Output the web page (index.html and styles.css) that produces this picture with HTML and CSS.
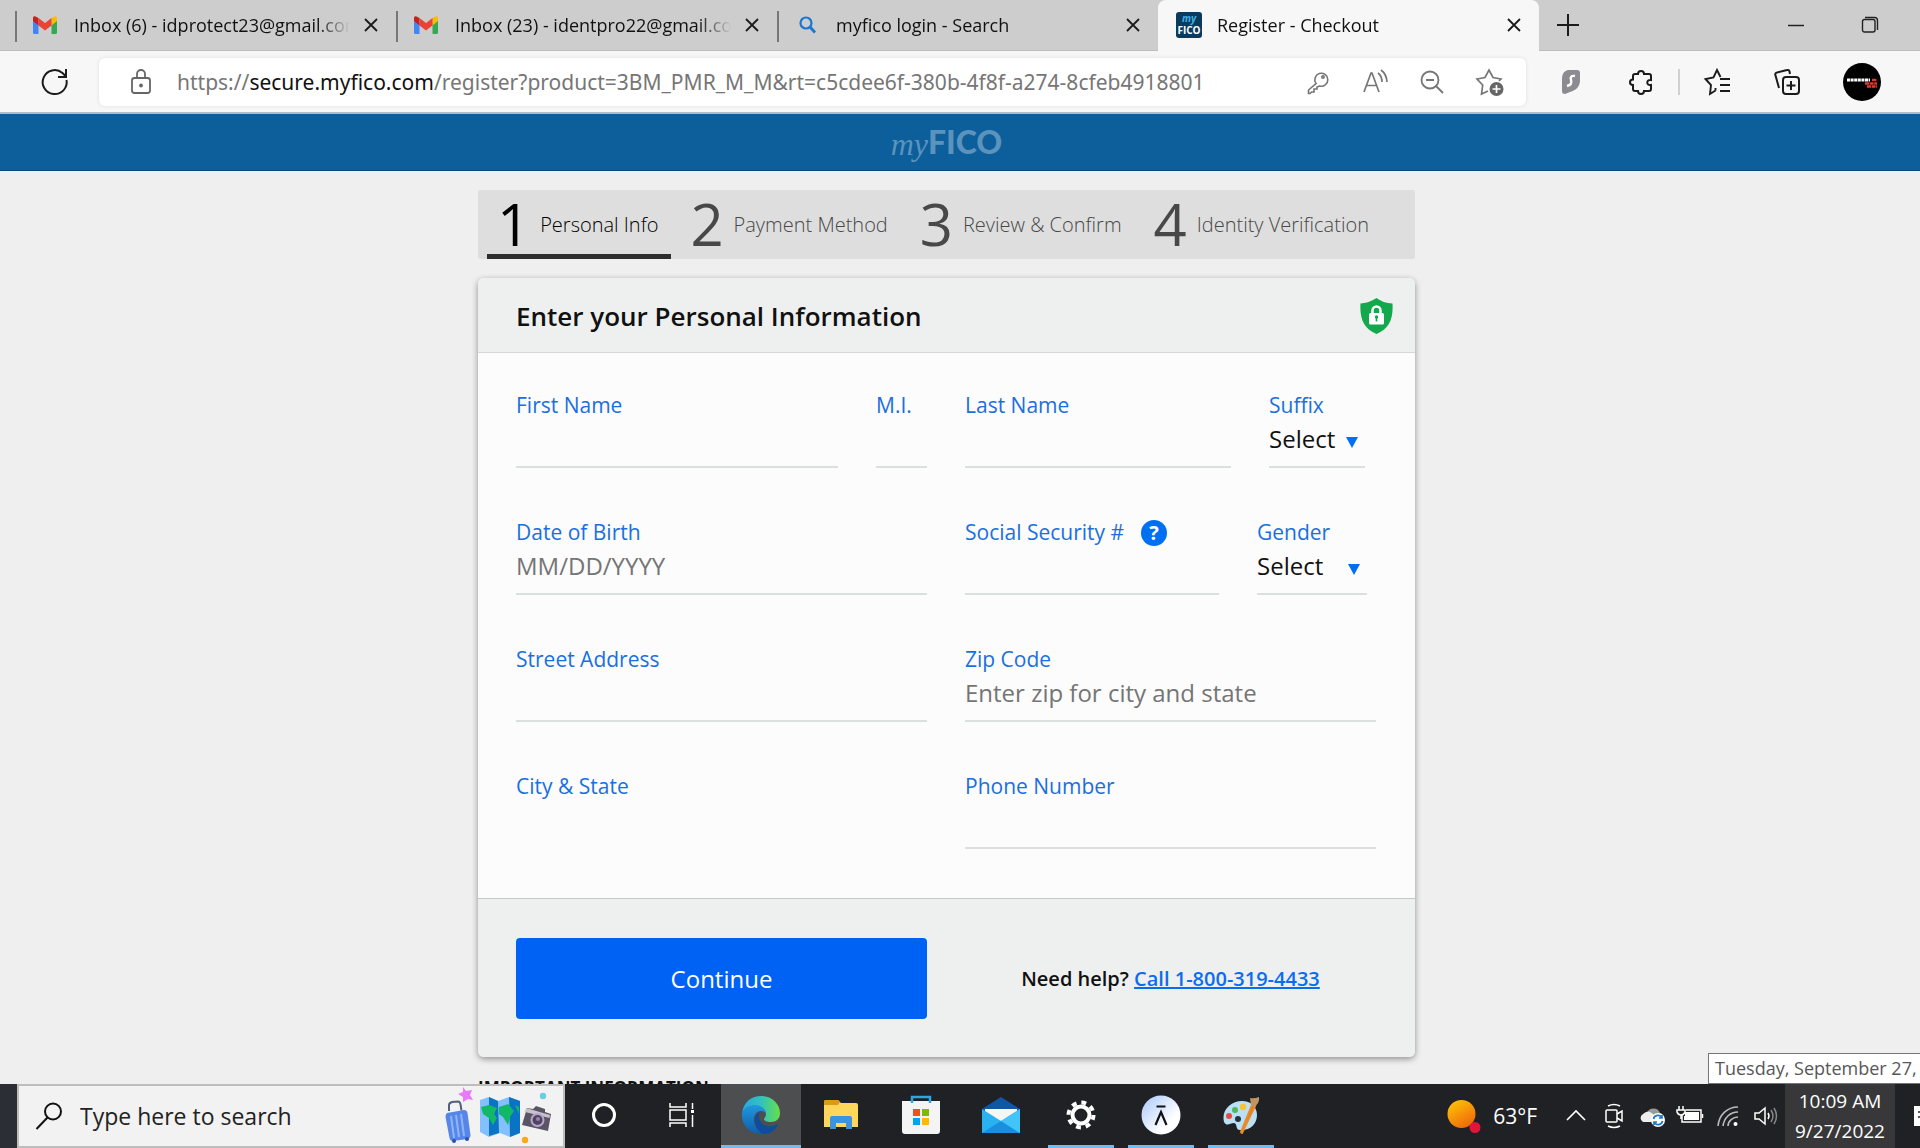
FILE: index.html
```
<!DOCTYPE html>
<html lang="en">
<head>
  <meta charset="utf-8">
  <title>Register - Checkout</title>
  <meta name="viewport" content="width=device-width, initial-scale=1.0">
  <link rel="stylesheet" href="styles.css">
</head>
<body>
<svg class="defs" aria-hidden="true">
  <symbol id="gmail" viewBox="0 0 24 18">
    <path d="M0 3v13.500a1.500 1.500 0 0 0 1.500 1.500H5.500V7z" fill="#4285f4"/>
    <path d="M24 3v13.500a1.500 1.500 0 0 1-1.500 1.500H18.500V7z" fill="#34a853"/>
    <path d="M18.500 2L22 .3a1.700 1.700 0 0 1 2 1.700V5l-5.500 4.500z" fill="#fbbc04"/>
    <path d="M5.500 2L2 .3A1.700 1.700 0 0 0 0 2V5l5.500 4.500z" fill="#c5221f"/>
    <path d="M5.500 9.500V2L12 7l6.500-5v7.500L12 14.500z" fill="#ea4335"/>
  </symbol>
  <symbol id="close" viewBox="0 0 16 16">
    <path d="M2 2l12 12M14 2L2 14" stroke="#1b1b1b" stroke-width="1.800" fill="none"/>
  </symbol>
</svg>

<div class="tabs">
  <div class="tab">
    <svg class="tab-icon" width="24" height="18"><use href="#gmail"/></svg>
    <span class="tab-title">Inbox (6) - idprotect23@gmail.com</span>
    <button class="tab-close" aria-label="Close tab"><svg width="16" height="16"><use href="#close"/></svg></button>
  </div>
  <div class="tab">
    <svg class="tab-icon" width="24" height="18"><use href="#gmail"/></svg>
    <span class="tab-title">Inbox (23) - identpro22@gmail.com</span>
    <button class="tab-close" aria-label="Close tab"><svg width="16" height="16"><use href="#close"/></svg></button>
  </div>
  <div class="tab">
    <svg class="tab-icon" width="24" height="18" viewBox="0 0 24 18"><circle cx="11" cy="7" r="5.500" fill="none" stroke="#1a77d2" stroke-width="2.200"/><path d="M15 11l5 5.500" stroke="#1a77d2" stroke-width="2.800"/></svg>
    <span class="tab-title">myfico login - Search</span>
    <button class="tab-close" aria-label="Close tab"><svg width="16" height="16"><use href="#close"/></svg></button>
  </div>
  <div class="tab active">
    <span class="favicon"><i>my</i><b>FICO</b></span>
    <span class="tab-title">Register - Checkout</span>
    <button class="tab-close" aria-label="Close tab"><svg width="16" height="16"><use href="#close"/></svg></button>
  </div>
  <button class="new-tab" aria-label="New tab"><svg width="24" height="24" viewBox="0 0 24 24"><path d="M12 1v22M1 12h22" stroke="#1b1b1b" stroke-width="2"/></svg></button>
  <div class="window-buttons">
    <button aria-label="Minimize"><svg width="18" height="18" viewBox="0 0 18 18"><path d="M1 9.500h16" stroke="#222" stroke-width="1.500"/></svg></button>
    <button aria-label="Restore"><svg width="18" height="18" viewBox="0 0 18 18" fill="none" stroke="#222" stroke-width="1.400"><rect x="1.500" y="3.500" width="12.500" height="12.500" rx="2"/><path d="M4 1.500h9.500a3 3 0 0 1 3 3V14"/></svg></button>
  </div>
</div>

<div class="toolbar">
  <button class="reload" aria-label="Refresh"><svg width="30" height="30" viewBox="0 0 30 30" fill="none" stroke="#1b1b1b" stroke-width="2"><path d="M26.500 13a12 12 0 1 1-4-7l3.500 3.500"/><path d="M26 2v8h-8"/></svg></button>
  <div class="address">
    <svg width="24" height="28" viewBox="0 0 24 28" fill="none" stroke="#666" stroke-width="1.800"><rect x="3" y="10" width="18" height="15" rx="2.500"/><path d="M8 10V6a4 4 0 0 1 8 0v4"/><circle cx="12" cy="17.500" r="1" fill="#666"/></svg>
    <div class="url" role="textbox" aria-label="Address" contenteditable="true" spellcheck="false">https://<span>secure.myfico.com</span>/register?product=3BM_PMR_M_M&amp;rt=c5cdee6f-380b-4f8f-a274-8cfeb4918801</div>
    <div class="address-icons">
      <button aria-label="Saved password"><svg width="28" height="28" viewBox="0 0 28 28" fill="none" stroke="#767676" stroke-width="1.600"><path d="M12 15.500a6.500 6.500 0 1 1 3.500 2.500L13 19v2h-3v3H7.500L6 25.500H4.500V22z"/><circle cx="19" cy="9" r="1.200"/></svg></button>
      <button aria-label="Read aloud"><svg width="28" height="28" viewBox="0 0 28 28" fill="none" stroke="#767676" stroke-width="1.700"><path d="M3 24L10 5h1l7 19M6 17.500h9M17 5q4 3 4 9M20 2q5.500 4 6 12"/></svg></button>
      <button aria-label="Zoom out"><svg width="28" height="28" viewBox="0 0 28 28" fill="none" stroke="#767676" stroke-width="1.800"><circle cx="12" cy="12" r="8.500"/><path d="M8 12h8M18 18l7 7"/></svg></button>
      <button aria-label="Add to favorites"><svg width="30" height="30" viewBox="0 0 30 30" fill="none" stroke="#767676" stroke-width="1.700"><path d="M13 24l-6.500 3 1.200-9L2 12l8-1.500L14 3l4 7.500 8 1.500-2 2"/><circle cx="21.500" cy="22" r="7" fill="#666" stroke="none"/><path d="M17.500 22h8M21.500 18v8" stroke="#fff"/></svg></button>
    </div>
  </div>
  <div class="extensions">
    <button aria-label="Extension"><svg width="28" height="28" viewBox="0 0 28 28"><path d="M11 2h9a3 3 0 0 1 3 3v7c0 7-4 10-10 12l-5 2a3 3 0 0 1-3-3V11c0-5 2-8 6-9z" fill="#8b8b90"/><path d="M18 8c-4-.5-5 1-4 4s0 5-4 6" fill="none" stroke="#fff" stroke-width="2.400"/></svg></button>
    <button aria-label="Extensions"><svg width="28" height="28" viewBox="0 0 28 28" fill="none" stroke="#1b1b1b" stroke-width="2"><path d="M11 6c0-4 6-4 6 0h5a2 2 0 0 1 2 2v4c-5-1-5 6 0 5v4a2 2 0 0 1-2 2h-5c0 4-6 4-6 0H8a2 2 0 0 1-2-2v-4c-4 0-4-5.500 0-5.500V8a2 2 0 0 1 2-2z"/></svg></button>
    <span class="divider"></span>
    <button aria-label="Favorites"><svg width="28" height="28" viewBox="0 0 28 28" fill="none" stroke="#1b1b1b" stroke-width="1.900"><path d="M12.500 22.500L7 26l1-9-5.500-6 8-1.500L14 2l3.500 7M17 11h10M17 17h10M17 23h10M12.500 22.500V20"/></svg></button>
    <button aria-label="Collections"><svg width="28" height="28" viewBox="0 0 28 28" fill="none" stroke="#1b1b1b" stroke-width="2"><rect x="10" y="9" width="16" height="17" rx="3"/><path d="M18 13v9M13.500 17.500h9M6 20L2.500 7.500a2 2 0 0 1 1.500-3L14 2a2 2 0 0 1 2.500 1.500L17 6"/></svg></button>
    <button class="avatar" aria-label="Profile"><svg width="38" height="38" viewBox="0 0 38 38"><path d="M4 17h23" stroke="#fff" stroke-width="3" stroke-dasharray="3 .6"/><path d="M29 17h5M22 20.500h12M24 23.500h10" stroke="#e03a30" stroke-width="2.400" stroke-dasharray="4 .6"/></svg></button>
  </div>
</div>

<div class="page">
  <header class="site-header"><span class="logo"><i>my</i><b>FICO</b></span></header>
  <main>
    <ol class="steps">
      <li class="current"><b>1</b><span>Personal Info</span></li>
      <li><b>2</b><span>Payment Method</span></li>
      <li><b>3</b><span>Review &amp; Confirm</span></li>
      <li><b>4</b><span>Identity Verification</span></li>
    </ol>

    <form class="card">
      <div class="card-header">
        <h1>Enter your Personal Information</h1>
        <svg width="33" height="36" viewBox="0 0 33 36"><path d="M16.500 0Q23 5 32.500 5.500C33.500 21 29 31 16.500 36 4 31-.5 21 .5 5.500 10 5 16.500 0 16.500 0z" fill="#13a84c"/><rect x="9" y="15" width="15" height="11.500" rx="1.500" fill="#fff"/><path d="M12.500 16v-3.500a4 4 0 0 1 8 0V16" fill="none" stroke="#fff" stroke-width="2.500"/><circle cx="16.500" cy="19" r="1.700" fill="#13a84c"/><path d="M16.500 19v4.500" stroke="#13a84c" stroke-width="1.600"/></svg>
      </div>

      <div class="card-body">
        <div class="half">
          <div class="field"><label for="first">First Name</label><input id="first" type="text"></div>
          <div class="field mi"><label for="mi">M.I.</label><input id="mi" type="text"></div>
        </div>
        <div class="half">
          <div class="field"><label for="last">Last Name</label><input id="last" type="text"></div>
          <div class="field suffix"><label for="suffix">Suffix</label><select id="suffix"><option>Select</option></select></div>
        </div>
        <div class="half">
          <div class="field"><label for="dob">Date of Birth</label><input id="dob" type="text" placeholder="MM/DD/YYYY"></div>
        </div>
        <div class="half">
          <div class="field">
            <div class="label-row"><label for="ssn">Social Security #</label><button type="button" class="help" aria-label="Why we ask">?</button></div>
            <input id="ssn" type="text">
          </div>
          <div class="field gender"><label for="gender">Gender</label><select id="gender"><option>Select</option></select></div>
        </div>
        <div class="half">
          <div class="field"><label for="street">Street Address</label><input id="street" type="text"></div>
        </div>
        <div class="half">
          <div class="field"><label for="zip">Zip Code</label><input id="zip" type="text" placeholder="Enter zip for city and state"></div>
        </div>
        <div class="half">
          <div class="field"><span class="label">City &amp; State</span></div>
        </div>
        <div class="half">
          <div class="field"><label for="phone">Phone Number</label><input id="phone" type="tel"></div>
        </div>
      </div>

      <div class="card-footer">
        <button type="button" class="continue">Continue</button>
        <p>Need help? <a href="tel:18003194433">Call 1-800-319-4433</a></p>
      </div>
    </form>

    <h2>IMPORTANT INFORMATION</h2>
  </main>
</div>

<div class="taskbar">
  <span class="start"></span>
  <div class="search">
    <svg width="28" height="28" viewBox="0 0 28 28" fill="none" stroke="#111" stroke-width="2"><circle cx="18" cy="9.500" r="8"/><path d="M12.500 15.500L1.500 27"/></svg>
    <input type="text" placeholder="Type here to search" aria-label="Type here to search">
    <svg width="112" height="58" viewBox="0 0 112 58">
      <path d="M22 0l3 4 6-1-2 5 3 5-5-1-5 3 0-5-5-3 5-2z" fill="#e879f9"/>
      <path d="M8 24v-6q0-2 3-3l6-.5q2 0 2.500 3l1 6" fill="none" stroke="#526080" stroke-width="2"/>
      <path d="M6 26l17-3q3 0 3.500 3l3 22q0 3-3 4L12 54q-3 0-3.500-3L4.500 30q0-3 1.500-4z" fill="#5687e8"/>
      <path d="M10 29l3 22M15 28l3 22M20 27l3 22" stroke="#8fb4fa" stroke-width="2"/>
      <circle cx="13" cy="54" r="2" fill="#2d4faa"/><circle cx="26" cy="52" r="2" fill="#2d4faa"/>
      <path d="M39 13l9-3 9 4 11-4 11 4v32l-10 4-10-4-11 4-9-5z" fill="#82c0ff"/>
      <path d="M48 10l9 4 1 32-10 3zM68 10l11 4v32l-10 4z" fill="#0a73c4"/>
      <path d="M40 20l8-2 8 3-3 6 3 4-4 7-4-7-6-4zM58 20l9-3 6 7-4 6-2 8-5-8-4-3zM74 18l4 2v7z" fill="#11b866"/>
      <path d="M86 21l6 1 3-3 9 3 0 3 6 2-3 17-26-6z" fill="#5a5564"/><path d="M85 21l24 7-.5 3-24.500-6z" fill="#c6c2ce"/>
      <circle cx="96.500" cy="33" r="7" fill="#b7a9c8"/><circle cx="96.500" cy="33" r="5" fill="#514362"/><circle cx="97" cy="32" r="2" fill="#9684b0"/>
      <circle cx="102" cy="9" r="3.200" fill="#67cfe2"/><circle cx="84" cy="53" r="3.200" fill="#fba919"/>
    </svg>
  </div>
  <div class="apps">
    <button class="system" aria-label="Cortana"><svg width="26" height="26" viewBox="0 0 26 26"><circle cx="13" cy="13" r="10.500" fill="none" stroke="#fff" stroke-width="3"/></svg></button>
    <button class="system" aria-label="Task view"><svg width="28" height="28" viewBox="0 0 28 28" fill="none" stroke="#fff" stroke-width="1.500"><path d="M2 2v4h16V2M2 26v-4h16v4M24.500 2v6M24.500 14v12"/><rect x="2" y="9" width="16" height="10"/><rect x="23" y="9" width="3" height="3" fill="#fff" stroke="none"/></svg></button>
    <button class="focused" aria-label="Edge"><svg width="40" height="40" viewBox="0 0 40 40">
      <defs>
        <linearGradient id="edge-top" x1="0" x2="1"><stop stop-color="#2aa6e0"/><stop offset=".5" stop-color="#31c2c0"/><stop offset="1" stop-color="#67df45"/></linearGradient>
        <linearGradient id="edge-left" x1="0" x2="0" y1="0" y2="1"><stop stop-color="#2098dc"/><stop offset="1" stop-color="#0e5dac"/></linearGradient>
      </defs>
      <path d="M1 18C3 6 11 1 20 1c11 0 19 8 19 17 0 6-4 9-9 9-4 0-7-1-7-3 0-1 2-2 2-5 0-4-5-8-11-8-7 0-12 4-13 7z" fill="url(#edge-top)"/>
      <path d="M1 18c1-4 6-8 13-8 6 0 11 4 11 9-1-2-3-3-5-3-5 0-8 5-7 10 1 7 5 12 11 13C9 41 0 30 1 18z" fill="url(#edge-left)"/>
      <path d="M20 16c-5 2-7 8-6 12 1 6 6 11 10 11 6 0 11-5 13-9 0-1-1-1-2 0-10 4-18-2-17-10 0-2 1-3 2-4z" fill="#0f4d9c"/>
    </svg></button>
    <button aria-label="File Explorer"><svg width="36" height="32" viewBox="0 0 36 32"><path d="M1 3a2 2 0 0 1 2-2h12l3 3h15a2 2 0 0 1 2 2v22H1z" fill="#ffd65c"/><path d="M1 6V3a2 2 0 0 1 2-2h12l2 2-2 3z" fill="#dd9b12"/><path d="M7 30V19a2 2 0 0 1 2-2h18a2 2 0 0 1 2 2v11h-6v-6H13v6z" fill="#3a94df"/></svg></button>
    <button aria-label="Microsoft Store"><svg width="40" height="40" viewBox="0 0 40 40"><path d="M1 6h38v30a3 3 0 0 1-3 3H4a3 3 0 0 1-3-3z" fill="#f4f4f4"/><path d="M11 8V2h18v6" fill="none" stroke="#31a5e0" stroke-width="2.500"/><path d="M12 14h7v7h-7z" fill="#f25022"/><path d="M21 14h7v7h-7z" fill="#7fba00"/><path d="M12 23h7v7h-7z" fill="#00a4ef"/><path d="M21 23h7v7h-7z" fill="#ffb900"/></svg></button>
    <button aria-label="Mail"><svg width="40" height="38" viewBox="0 0 40 38"><path d="M1 13L20 1l19 12v8H1z" fill="#0f57a4"/><path d="M4 13h32v14H4z" fill="#f6f6f6"/><path d="M1 13l19 12 19-12v24H1z" fill="#29b1f0"/><path d="M20 25l19 12H1z" fill="#1a8fdf"/><path d="M20 25l19-12v24z" fill="#41c4f8"/></svg></button>
    <button class="running" aria-label="Settings"><svg width="32" height="32" viewBox="0 0 32 32" fill="none" stroke="#fff"><circle cx="16" cy="16" r="8.500" stroke-width="4"/><circle cx="16" cy="16" r="12.500" stroke-width="4" stroke-dasharray="4.900 4.917"/></svg></button>
    <button class="running" aria-label="Anker"><svg width="40" height="40" viewBox="0 0 40 40"><defs><linearGradient id="pale" x2="1" y2="1"><stop stop-color="#a9c8ff"/><stop offset=".7" stop-color="#fff"/></linearGradient></defs><circle cx="20" cy="20" r="19.500" fill="url(#pale)"/><path d="M15.500 11.500h9M14.500 30L20 17l5.500 13" fill="none" stroke="#111" stroke-width="2.200"/></svg></button>
    <button class="running" aria-label="Paint"><svg width="38" height="38" viewBox="0 0 38 38"><path d="M2 26C-1 14 9 5 20 5c9 0 15 6 15 14 0 10-8 16-17 15-5 0-2-6-6-7-4 0-7 4-10-1z" fill="#b9e0f5"/><circle cx="16" cy="23" r="3" fill="#26333b"/><circle cx="7" cy="20" r="3" fill="#e34b43"/><circle cx="13" cy="14" r="3" fill="#50b857"/><circle cx="21" cy="11" r="3.200" fill="#f4c52c"/><path d="M30 9l3 1-13 27-1-1z" fill="#d9731b" stroke="#e98a2b" stroke-width="2"/><path d="M28 2q4 1 9-1 1 6-5 10l-3-2z" fill="#c19462"/></svg></button>
  </div>

  <div class="tray">
    <div class="weather">
      <svg width="34" height="34" viewBox="0 0 34 34"><defs><linearGradient id="sun" x2=".6" y2="1"><stop stop-color="#ffcb05"/><stop offset="1" stop-color="#ef6c0a"/></linearGradient></defs><circle cx="14.500" cy="15" r="14" fill="url(#sun)"/><circle cx="28" cy="28.500" r="5.500" fill="#e0143c"/></svg>
      <span>63°F</span>
    </div>
    <button aria-label="Hidden icons"><svg width="22" height="22" viewBox="0 0 22 22"><path d="M2 15l9-9 9 9" fill="none" stroke="#fff" stroke-width="1.700"/></svg></button>
    <button aria-label="Meet now"><svg width="22" height="26" viewBox="0 0 22 26" fill="none" stroke="#fff" stroke-width="1.500"><rect x="3" y="7" width="11" height="12" rx="1"/><path d="M14 11l5-3v10l-5-3M5 3q6-3 12 0M5 23q6 3 12 0"/></svg></button>
    <button aria-label="OneDrive"><svg width="28" height="24" viewBox="0 0 28 24"><path d="M9 9a7 7 0 0 1 13 0q4 1 4 5H10z" fill="#9a9a9a"/><path d="M5 18a4.500 4.500 0 0 1 0-8q5-5 10 0l3 3v5z" fill="#eee"/><circle cx="20" cy="16" r="7" fill="#fff"/><path d="M15.500 15a4.500 4.500 0 0 1 8.500-1m0-3v3h-3M24.500 17a4.500 4.500 0 0 1-8.500 1m0 3v-3h3" fill="none" stroke="#1f78c8" stroke-width="1.700"/></svg></button>
    <button aria-label="Battery"><svg width="28" height="22" viewBox="0 0 28 22" fill="none" stroke="#fff" stroke-width="1.500"><path d="M10 5h15v12H6v-7"/><path d="M9 11V7h14v8H8v-4z" fill="#fff" stroke="none"/><path d="M26.500 9v4M3 1v4M7 1v4M1 5h8v2q-1 3-4 3-3 0-4-3zM5 10v4"/></svg></button>
    <button aria-label="Network"><svg width="24" height="24" viewBox="0 0 24 24" fill="none" stroke="#bbb" stroke-width="1.600"><path d="M2 22C3 11 11 3 22 3M7 22C8 14 14 8 22 8M12 22c0-5 5-9 10-9"/><circle cx="19.500" cy="20" r="2" fill="#fff" stroke="none"/></svg></button>
    <button aria-label="Volume"><svg width="26" height="22" viewBox="0 0 26 22" fill="none" stroke="#fff" stroke-width="1.500"><path d="M2 8h4l6-5v16l-6-5H2zM15 8q2 3 0 6"/><path d="M18 5q4 6 0 12M21 3q5 8 0 16" stroke="#888"/></svg></button>
    <button class="clock"><span>10:09 AM</span><span>9/27/2022</span></button>
    <button class="notes" aria-label="Notifications"><svg width="24" height="24" viewBox="0 0 24 24"><path d="M1 2h22v20H1z" fill="#fff"/><path d="M5 8h14M5 13h14" stroke="#222" stroke-width="1.500"/></svg></button>
  </div>
  <div class="tooltip">Tuesday, September 27,</div>
</div>
</body>
</html>
```

FILE: styles.css
```
* {
  box-sizing: border-box;
}

body {
  display: flex;
  flex-direction: column;
  height: 100vh;
  margin: 0;
  overflow: hidden;
  background: #efefef;
  color: #111;
  font-family: 'Open Sans', 'Noto Sans', sans-serif;
}

button, input, select {
  margin: 0;
  padding: 0;
  border: 0;
  border-radius: 0;
  background: none;
  color: inherit;
  font-family: inherit;
  outline: none;
}

button {
  display: flex;
  align-items: center;
  justify-content: center;
}

svg {
  flex: none;
}

.defs {
  position: absolute;
  width: 0;
  height: 0;
}

/* tabs */
.tabs {
  display: flex;
  flex: none;
  height: 51px;
  padding-left: 15px;
  background: #cdcdcd;
  border-bottom: 1px solid #bdbdbd;
}

.tab {
  display: flex;
  align-items: center;
  width: 381px;
  padding: 0 17px 0 16px;
  font-size: 18px;
  background: linear-gradient(#777, #777) 0 11px / 2px 31px no-repeat;
}

.tab.active {
  background: #f7f7f7;
  border-radius: 8px 8px 0 0;
  box-shadow: 0 1px #f7f7f7;
}

.tab-icon, .favicon {
  flex: none;
  margin: 0 17px 0 2px;
}

.tab-title {
  flex: 1;
  overflow: hidden;
  white-space: nowrap;
  -webkit-mask-image: linear-gradient(90deg, #000 88%, transparent);
  mask-image: linear-gradient(90deg, #000 88%, transparent);
}

.tab-close {
  width: 16px;
  height: 16px;
  margin-left: 13px;
}

.favicon {
  display: flex;
  flex-direction: column;
  align-items: center;
  width: 26px;
  height: 26px;
  margin-right: 15px;
  border-radius: 3px;
  background: #0a3a5c;
  color: #fff;
  font-size: 10px;
  line-height: 12px;
}

.favicon i {
  color: #3db0e8;
  font-weight: 700;
}

.new-tab {
  width: 58px;
}

.window-buttons {
  display: flex;
  margin-left: auto;
  padding-right: 13px;
}

.window-buttons button {
  width: 74px;
}

/* toolbar */
.toolbar {
  display: flex;
  flex: none;
  align-items: center;
  height: 63px;
  background: #f7f7f7;
  border-bottom: 2px solid #b3bcc4;
}

.reload {
  width: 99px;
  padding-left: 10px;
}

.address {
  display: flex;
  flex: 1;
  align-items: center;
  height: 48px;
  padding: 0 21px 0 30px;
  border-radius: 6px;
  background: #fff;
  box-shadow: 0 0 4px rgba(0, 0, 0, .1);
}

.url {
  flex: 1;
  margin-left: 24px;
  overflow: hidden;
  white-space: nowrap;
  color: #767676;
  font-family: 'Noto Sans', sans-serif;
  font-size: 21px;
  outline: none;
}

.url span {
  color: #111;
}

.address-icons {
  display: flex;
  gap: 29px;
}

.extensions {
  display: flex;
  align-items: center;
  gap: 42px;
  padding: 0 39px 0 31px;
}

.divider {
  width: 2px;
  height: 26px;
  margin: 0 -19px;
  background: #d0d0d0;
}

.avatar {
  width: 38px;
  height: 38px;
  border-radius: 50%;
  background: #000;
}

/* page */
.page {
  flex: 1;
  min-height: 0;
  padding-right: 27px;
  overflow: hidden;
}

.site-header {
  display: flex;
  justify-content: center;
  height: 57px;
  margin-right: -27px;
  padding-right: 27px;
  background: #0c5f9b;
  border-bottom: 1px solid #0a4a7a;
}

.logo {
  display: flex;
  align-items: center;
  color: #5b93bd;
  font-family: 'Lato', sans-serif;
  font-size: 32px;
  line-height: 58px;
}

.logo i {
  padding-top: 4px;
  font-family: 'Liberation Serif', serif;
}

.logo b {
  font-weight: 900;
}

main {
  max-width: 937px;
  margin: 19px auto 0;
}

.steps {
  display: flex;
  height: 69px;
  margin: 0 0 19px;
  padding: 0 9px;
  border-radius: 3px;
  background: #dedede;
  color: #484848;
  list-style: none;
}

.steps li {
  display: flex;
  align-items: center;
  gap: 10px;
  margin-right: 9px;
  padding: 4px 13px 0 10px;
  border-bottom: 5px solid transparent;
  font-size: 20px;
  font-weight: 300;
  white-space: nowrap;
}

.steps b {
  font-size: 58px;
  font-weight: 400;
  line-height: 60px;
}

.steps .current {
  border-color: #2e2e2e;
  color: #000;
}

.card {
  border-radius: 6px;
  background: #fcfcfc;
  box-shadow: 0 2px 6px rgba(0, 0, 0, .4);
}

.card-header {
  display: flex;
  align-items: center;
  justify-content: space-between;
  height: 75px;
  padding: 2px 22px 0 38px;
  border-bottom: 1px solid #d4d8d8;
  border-radius: 6px 6px 0 0;
  background: #eef0f0;
}

h1 {
  margin: 0;
  font-size: 26px;
  font-weight: 600;
}

.card-body {
  display: grid;
  grid-template-columns: 1fr 1fr;
  gap: 50px 38px;
  padding: 38px 39px 49px 38px;
}

.half {
  display: flex;
  gap: 38px;
  height: 77px;
}

.field {
  position: relative;
  display: flex;
  flex: 1;
  flex-direction: column;
  min-width: 0;
}

.field.mi {
  flex: 0 0 51px;
}

.field.suffix {
  flex: 0 0 96px;
  margin-right: 11px;
}

.field.gender {
  flex: 0 0 110px;
  margin-right: 9px;
}

.field label, .field .label {
  color: #1a6fe0;
  font-size: 21px;
  line-height: 29px;
  white-space: nowrap;
}

.field input, .field select {
  width: 100%;
  height: 48px;
  padding-bottom: 9px;
  border-bottom: 2px solid #dcdfdf;
  color: #111;
  font-size: 24px;
  appearance: none;
}

.field input::placeholder {
  color: #757575;
  opacity: 1;
}

.suffix::after, .gender::after {
  position: absolute;
  right: 7px;
  bottom: 20px;
  width: 12px;
  height: 11px;
  background: #0070f3;
  clip-path: polygon(0 0, 100% 0, 50% 100%);
  content: '';
  pointer-events: none;
}

.label-row {
  display: flex;
  align-items: center;
  gap: 17px;
  height: 29px;
}

.help {
  width: 26px;
  height: 26px;
  border-radius: 50%;
  background: #0070f3;
  color: #fff;
  font-size: 20px;
  font-weight: 700;
  line-height: 26px;
}

.card-footer {
  display: grid;
  grid-template-columns: 1fr 1fr;
  align-items: center;
  gap: 38px;
  padding: 39px 39px 38px 38px;
  border-top: 1px solid #c4c8c8;
  border-radius: 0 0 6px 6px;
  background: #eef0f0;
}

.continue {
  height: 81px;
  border-radius: 4px;
  background: #0062f5;
  color: #fff;
  font-size: 24px;
}

.card-footer p {
  margin: 0;
  font-size: 20px;
  font-weight: 600;
  text-align: center;
}

.card-footer a {
  color: #0a6cf0;
}

h2 {
  margin: 19px 0 0;
  font-size: 17px;
  font-weight: 700;
  line-height: 24px;
}

/* taskbar */
.taskbar {
  position: relative;
  display: flex;
  flex: none;
  height: 64px;
  background: #202124;
  color: #fff;
}

.start {
  width: 17px;
  background: #2b2e34;
}

.search {
  display: flex;
  align-items: center;
  width: 548px;
  padding: 0 10px 0 16px;
  border: 2px solid #bdbdbd;
  background: #f2f2f2;
  color: #222;
}

.search input {
  flex: 1;
  min-width: 0;
  margin-left: 17px;
  font-size: 23px;
}

.search input::placeholder {
  color: #222;
  opacity: 1;
}

.apps {
  display: flex;
}

.apps button {
  width: 80px;
  border-bottom: 3px solid transparent;
}

.apps .system {
  width: 78px;
}

.apps .focused {
  border-color: #76b9ed;
  background: #4d4e50;
}

.apps .running {
  width: 66px;
  margin: 0 7px;
  border-color: #76b9ed;
}

.tray {
  display: flex;
  margin-left: auto;
}

.tray button {
  width: 38px;
}

.weather {
  display: flex;
  align-items: center;
  gap: 12px;
  margin-right: 20px;
  font-size: 21px;
}

.tray .clock {
  flex-direction: column;
  width: 110px;
  background: #38383a;
  font-size: 19px;
  line-height: 30px;
}

.tray .notes {
  justify-content: flex-start;
  width: 25px;
  padding-left: 18px;
  overflow: hidden;
}

.tooltip {
  position: absolute;
  right: 0;
  bottom: 64px;
  width: 212px;
  height: 31px;
  padding-left: 6px;
  border: 1px solid #767676;
  border-right: 0;
  background: #fff;
  color: #575757;
  font-size: 18px;
  line-height: 29px;
  white-space: nowrap;
}
```
